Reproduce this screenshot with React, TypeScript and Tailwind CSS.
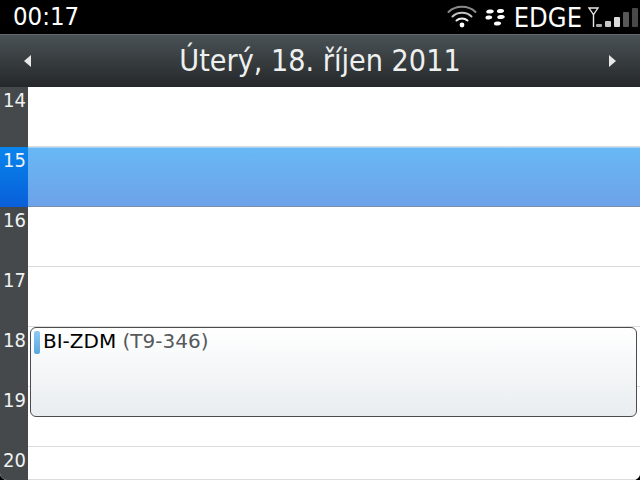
const hours = [
  { label: "14", h: "h-[60px]" },
  { label: "15", h: "h-[60px]", active: true },
  { label: "16", h: "h-[60px]" },
  { label: "17", h: "h-[60px]" },
  { label: "18", h: "h-[60px]" },
  { label: "19", h: "h-[60px]" },
  { label: "20", h: "h-[33px]" },
];

const condensed = "font-['DejaVu_Sans_Condensed','DejaVu_Sans',sans-serif]";

function WifiIcon() {
  return (
    <svg width="30" height="24" viewBox="0 0 30 24" fill="none" className="block -mt-[2px]">
      <path d="M1.5 8C8.5 1 21.5 1 28.5 8" stroke="#8a8a8a" strokeWidth="2" strokeLinecap="round" />
      <path d="M5.5 12.5C10.5 7.5 19.5 7.5 24.5 12.5" stroke="#c4c4c4" strokeWidth="2" strokeLinecap="round" />
      <path d="M9.5 16.5C12.5 13.8 17.5 13.8 20.5 16.5" stroke="#f0f0f0" strokeWidth="2" strokeLinecap="round" />
      <circle cx="15" cy="21" r="2.4" fill="#fff" />
    </svg>
  );
}

function BerryLogo() {
  return (
    <svg width="21" height="20" viewBox="0 0 21 20" fill="#fff" className="block">
      <ellipse cx="5" cy="4.5" rx="3.8" ry="2" transform="rotate(-8 5 4.5)" />
      <ellipse cx="15.5" cy="4" rx="3.6" ry="2" transform="rotate(-8 15.5 4)" />
      <ellipse cx="3.8" cy="10.5" rx="3.4" ry="2" transform="rotate(-8 3.8 10.5)" />
      <ellipse cx="16" cy="10" rx="3.8" ry="2" transform="rotate(-8 16 10)" />
      <ellipse cx="12.5" cy="16.5" rx="3.6" ry="2" transform="rotate(-8 12.5 16.5)" />
    </svg>
  );
}

function SignalIcon() {
  return (
    <svg width="52" height="20" viewBox="0 0 52 20" className="block">
      <path d="M1 1H10L5.5 7.5Z" fill="none" stroke="#e8e8e8" strokeWidth="1.3" />
      <rect x="4.8" y="7" width="1.4" height="13" fill="#e8e8e8" />
      <rect x="8" y="17" width="6" height="3" rx="1" fill="#a8a8a8" />
      <rect x="17" y="14" width="6" height="6" rx="1" fill="#c8c8c8" />
      <rect x="26" y="10" width="6" height="10" rx="1" fill="#dcdcdc" />
      <rect x="35" y="5" width="6" height="15" rx="1" fill="#585858" />
      <rect x="44" y="1" width="6" height="19" rx="1" fill="#484848" />
    </svg>
  );
}

export default function App() {
  return (
    <div className="flex h-[480px] w-[640px] flex-col overflow-hidden bg-black font-['DejaVu_Sans',sans-serif]">
      <div className="flex h-[34px] items-center justify-between bg-black pl-[13px] text-white">
        <span className={`${condensed} text-[25.5px] leading-none`}>00:17</span>
        <div className="flex items-center">
          <WifiIcon />
          <div className="ml-[8px]">
            <BerryLogo />
          </div>
          <span className={`${condensed} ml-[8px] text-[27px] leading-none`}>EDGE</span>
          <div className="ml-[6px]">
            <SignalIcon />
          </div>
        </div>
      </div>

      <div className="flex h-[53px] items-center justify-between border-t border-[#646a6c] bg-gradient-to-b from-[#4a5255] to-[#25282a] px-[23px] text-[#eef0f0]">
        <svg width="10" height="14" viewBox="0 0 10 14" className="block">
          <path d="M8 1V13L1 7Z" fill="#e8e8e8" />
        </svg>
        <span className={`${condensed} text-[30.2px] leading-none`}>Úterý, 18. říjen 2011</span>
        <svg width="10" height="14" viewBox="0 0 10 14" className="block">
          <path d="M2 1V13L9 7Z" fill="#e8e8e8" />
        </svg>
      </div>

      <div className="relative flex-1 overflow-hidden rounded-b-[7px] bg-white">
        {hours.map((hour) => (
          <div key={hour.label} className={`flex ${hour.h}`}>
            <div
              className={`${condensed} w-[28px] shrink-0 pl-[3px] pt-[1px] text-[20px] leading-[24px] text-[#f0f2f2] ${
                hour.active ? "bg-gradient-to-b from-[#0a85ee] to-[#0a5fd8]" : "bg-[#45494b]"
              }`}
            >
              {hour.label}
            </div>
            <div
              className={`flex-1 border-b ${
                hour.active
                  ? "border-t border-t-[#a5d4f7] border-b-[#7d8fa8] bg-gradient-to-b from-[#68b8f5] to-[#6da2e8]"
                  : "border-b-[#dcdcdc] bg-white"
              }`}
            />
          </div>
        ))}

        {/* event block sits over the hour rows */}
        <div className="absolute left-[30px] top-[240px] flex h-[90px] w-[607px] rounded-[6px] border border-[#4a4d4f] bg-gradient-to-b from-white to-[#e9edef] pl-[3px] pt-[3px]">
          <div className="h-[23px] w-[6px] rounded-[2px] bg-gradient-to-b from-[#8ccaf0] to-[#5ba6e0]" />
          <span className="ml-[3px] -mt-[1px] text-[20px] leading-[22px] text-black">
            BI-ZDM <span className="text-[#555a5c]">(T9-346)</span>
          </span>
        </div>
      </div>
    </div>
  );
}
